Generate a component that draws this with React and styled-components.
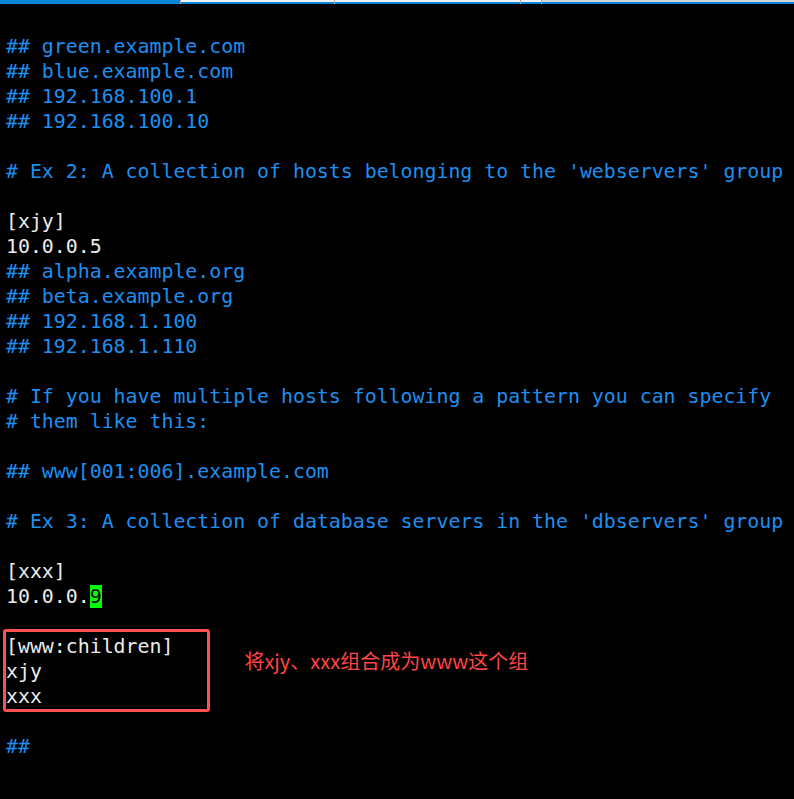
import styled, { createGlobalStyle } from "styled-components";

const GlobalStyle = createGlobalStyle`
  html, body {
    margin: 0;
    padding: 0;
    background: #000;
  }
  body {
    width: 794px;
    height: 799px;
    overflow: hidden;
  }
`

const Screen = styled.div`
  width: 794px;
  height: 799px;
  background: #000;
  overflow: hidden;
`

const TabStrip = styled.div`
  display: flex;
  height: 4px;
  overflow: hidden;
`

const Tab = styled.div`
  height: 100%;
  width: ${p => p.w}px;
  flex: ${p => p.grow ? "1 1 auto" : "0 0 auto"};
  box-sizing: border-box;
  background: ${p => p.active ? "#0a84d8" : "linear-gradient(#f2f2f2 0 55%, #0a84d8 55% 100%)"};
  border-left: ${p => p.active ? "0" : "1px solid #a9a9a9"};
  &.dim {
    background: linear-gradient(#d6d6d6 0 55%, #0a84d8 55% 100%);
  }
`

const Editor = styled.div`
  padding: 29.5px 0 0 6px;
  font-family: "DejaVu Sans Mono", "Liberation Mono", monospace;
  font-size: 19.88px;
  line-height: 25px;
  color: #ececec;
  white-space: pre;
`

const Line = styled.div`
  height: 25px;
  color: ${p => p.comment ? "#1e8fef" : "#ececec"};
`

const Cursor = styled.span`
  background: #00ff00;
  color: #000;
`

const GroupRow = styled.div`
  display: flex;
  align-items: flex-start;
`

const GroupBox = styled.div`
  margin: -4.5px 0 -2.5px -3px;
  padding: 1.5px 34px 0 0;
  border: 3px solid #fa5252;
  border-radius: 3px;
`

const Note = styled.div`
  margin: 15px 0 0 34px;
  font-family: "Noto Sans CJK SC", "Noto Sans", sans-serif;
  font-size: 20px;
  line-height: 24px;
  color: #ff4545;
  white-space: nowrap;
`

const top = [
  ["## green.example.com", true],
  ["## blue.example.com", true],
  ["## 192.168.100.1", true],
  ["## 192.168.100.10", true],
  ["", false],
  ["# Ex 2: A collection of hosts belonging to the 'webservers' group", true],
  ["", false],
  ["[xjy]", false],
  ["10.0.0.5", false],
  ["## alpha.example.org", true],
  ["## beta.example.org", true],
  ["## 192.168.1.100", true],
  ["## 192.168.1.110", true],
  ["", false],
  ["# If you have multiple hosts following a pattern you can specify", true],
  ["# them like this:", true],
  ["", false],
  ["## www[001:006].example.com", true],
  ["", false],
  ["# Ex 3: A collection of database servers in the 'dbservers' group", true],
  ["", false],
  ["[xxx]", false],
]

export default function App() {
  return (
    <Screen>
      <GlobalStyle />
      <TabStrip>
        <Tab active w={180} />
        <Tab w={154} />
        <Tab w={186} />
        <Tab w={21} />
        <Tab grow className="dim" />
      </TabStrip>
      <Editor>
        {top.map(([text, comment], i) => (
          <Line key={i} comment={comment}>{text}</Line>
        ))}
        <Line>10.0.0.<Cursor>9</Cursor></Line>
        <Line />
        <GroupRow>
          <GroupBox>
            <Line>[www:children]</Line>
            <Line>xjy</Line>
            <Line>xxx</Line>
          </GroupBox>
          <Note>将xjy、xxx组合成为www这个组</Note>
        </GroupRow>
        <Line />
        <Line comment>##</Line>
      </Editor>
    </Screen>
  )
}
